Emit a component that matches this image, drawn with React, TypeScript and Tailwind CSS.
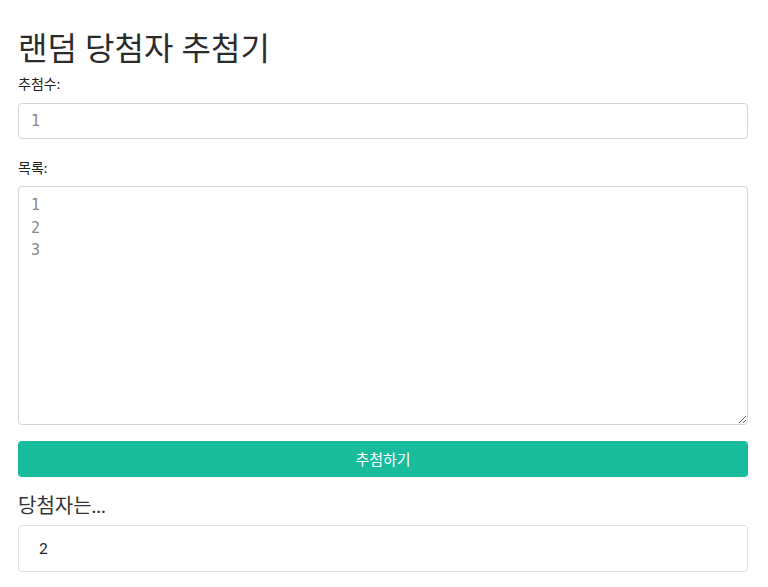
export default function App() {
  return (
    <div
      className="min-h-screen bg-white pl-[18px] pr-[20px] pt-[24px] text-[#222]"
      style={{ fontFamily: "Lato, 'Noto Sans CJK KR', sans-serif" }}
    >
      <h1 className="text-[32px] leading-[48px] text-[#2b2b2b]">랜덤 당첨자 추첨기</h1>
      <label className="mt-[2px] block text-[14px] leading-[20px]">추첨수:</label>
      <div className="mt-[9px] flex h-[36px] items-center rounded-[4px] border border-[#ced4da] px-[12px] font-['DejaVu_Sans_Mono',monospace] text-[15px] text-[#888]">
        1
      </div>
      <label className="mt-[19px] block text-[14px] leading-[20px]">목록:</label>
      <textarea
        readOnly
        defaultValue={"1\n2\n3"}
        className="mt-[8px] block h-[239px] w-full resize-y rounded-[4px] border border-[#ced4da] px-[12px] py-[7px] font-['DejaVu_Sans_Mono',monospace] text-[15px] leading-[22.5px] text-[#888] outline-none"
      />
      <button className="mt-[16px] flex h-[36px] w-full items-center justify-center rounded-[4px] bg-[#18bc9c] text-[15px] text-white">
        추첨하기
      </button>
      <h2 className="mt-[14px] text-[20px] leading-[28px] text-[#333]">당첨자는...</h2>
      <div className="mt-[6px] flex h-[47px] items-center rounded-[4px] border border-[#dee2e6] px-[20px] text-[15px] text-[#222]">
        2
      </div>
    </div>
  );
}
